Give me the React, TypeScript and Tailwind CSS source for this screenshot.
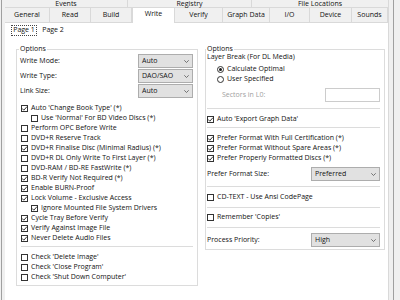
import React from "react";

function Check({ checked }: { checked?: boolean }) {
  return (
    <span className="w-[7px] h-[7px] border border-[#333333] bg-white flex items-center justify-center shrink-0">
      {checked && (
        <svg width="5" height="5" viewBox="0 0 5 5" className="overflow-visible">
          <path d="M0 2.4 L1.8 4.2 L5 0.6" stroke="#1a1a1a" strokeWidth="0.9" fill="none" />
        </svg>
      )}
    </span>
  );
}

function CB({ label, checked, className }: { label: string; checked?: boolean; className?: string }) {
  return (
    <div className={"flex items-center h-[10px] " + (className ?? "")}>
      <Check checked={checked} />
      <span className="ml-[3px] whitespace-nowrap leading-[10px]">{label}</span>
    </div>
  );
}

function Radio({ label, checked }: { label: string; checked?: boolean }) {
  return (
    <div className="flex items-center h-[10px] pl-[11px]">
      <span className="w-[7px] h-[7px] rounded-full border border-[#333333] bg-white flex items-center justify-center shrink-0">
        {checked && <span className="w-[3px] h-[3px] rounded-full bg-[#1a1a1a]" />}
      </span>
      <span className="ml-[3px] whitespace-nowrap leading-[10px]">{label}</span>
    </div>
  );
}

function Chevron() {
  return (
    <svg width="5" height="3" viewBox="0 0 5 3" className="shrink-0">
      <path d="M0.3 0.3 L2.5 2.5 L4.7 0.3" stroke="#555555" strokeWidth="0.8" fill="none" />
    </svg>
  );
}

function Select({ value, className }: { value: string; className: string }) {
  return (
    <div className={"h-[14px] border border-[#adadad] bg-[#e1e1e1] flex items-center justify-between pl-[3px] pr-[3px] " + className}>
      <span className="leading-[10px] whitespace-nowrap">{value}</span>
      <Chevron />
    </div>
  );
}

function Sep({ className }: { className: string }) {
  return <div className={"h-px bg-[#dcdcdc] " + className} />;
}

export default function App() {
  const row2 = [
    { t: "General", w: "w-[45px]" },
    { t: "Read", w: "w-[41px]" },
    { t: "Build", w: "w-[41px]" },
    { t: "Write", w: "w-[43px]", sel: true },
    { t: "Verify", w: "w-[48px]" },
    { t: "Graph Data", w: "w-[47px]" },
    { t: "I/O", w: "w-[40px]" },
    { t: "Device", w: "w-[42px]" },
    { t: "Sounds", w: "w-[36px]" },
  ];
  return (
    <div className="w-[400px] h-[300px] overflow-hidden flex bg-[#f0f0f0] text-[7px] text-[#111111] font-['Open_Sans',sans-serif]">
      {/* left frame */}
      <div className="flex h-full shrink-0">
        <div className="w-[1px] bg-[#f0f0f0]" />
        <div className="w-[1px] bg-[#a0a0a0]" />
        <div className="w-[3px] bg-[#f0f0f0]" />
      </div>

      {/* main */}
      <div className="w-[383px] flex flex-col shrink-0">
        {/* row 1 tabs */}
        <div className="h-[8px] flex shrink-0">
          <div className="w-[123px] border-r border-b border-[#d9d9d9] flex items-center justify-center leading-[7px]">Events</div>
          <div className="w-[124px] border-r border-b border-[#d9d9d9] flex items-center justify-center leading-[7px]">Registry</div>
          <div className="w-[136px] border-b border-[#d9d9d9] flex items-center justify-center leading-[7px]">File Locations</div>
        </div>
        {/* row 2 tabs */}
        <div className="h-[14px] flex shrink-0 items-start">
          {row2.map((t) =>
            t.sel ? (
              <div
                key={t.t}
                className={t.w + " -mt-px h-[16px] relative z-10 bg-white border-l border-r border-t border-[#d9d9d9] flex items-center justify-center pb-[2px] shrink-0"}
              >
                {t.t}
              </div>
            ) : (
              <div key={t.t} className={t.w + " h-[14px] border-r border-[#d9d9d9] flex items-center justify-center shrink-0"}>
                {t.t}
              </div>
            )
          )}
        </div>

        {/* page panel */}
        <div className="flex-1 bg-white border-t border-[#d9d9d9] flex flex-col">
          {/* page tabs */}
          <div className="mt-[2px] h-[11px] flex items-center shrink-0">
            <div className="ml-[6px] w-[26px] h-[11px] border border-dotted border-[#444444] flex items-center justify-center">Page 1</div>
            <div className="ml-[4px] w-[24px] h-[11px] flex items-center justify-center">Page 2</div>
          </div>

          {/* group boxes */}
          <div className="mt-[13px] ml-[11px] flex items-start gap-[7px]">
            {/* left group */}
            <div className="relative w-[182px] h-[237px] border border-[#dcdcdc] flex flex-col shrink-0">
              <span className="absolute -top-[6px] left-[2px] px-[1px] bg-white leading-[10px]">Options</span>
              <div className="mt-[4px] flex items-center justify-between pl-[3px] pr-[4px]">
                <span>Write Mode:</span>
                <Select value="Auto" className="w-[55px]" />
              </div>
              <div className="mt-[1px] flex items-center justify-between pl-[3px] pr-[4px]">
                <span>Write Type:</span>
                <Select value="DAO/SAO" className="w-[55px]" />
              </div>
              <div className="mt-[1px] flex items-center justify-between pl-[3px] pr-[4px]">
                <span>Link Size:</span>
                <Select value="Auto" className="w-[55px]" />
              </div>
              <div className="mt-[5px] flex flex-col">
                <CB className="pl-[4px]" checked label="Auto 'Change Book Type' (*)" />
                <CB className="pl-[14px]" label="Use 'Normal' For BD Video Discs (*)" />
                <CB className="pl-[4px]" label="Perform OPC Before Write" />
                <CB className="pl-[4px]" label="DVD+R Reserve Track" />
                <CB className="pl-[4px]" checked label="DVD+R Finalise Disc (Minimal Radius) (*)" />
                <CB className="pl-[4px]" label="DVD+R DL Only Write To First Layer (*)" />
                <CB className="pl-[4px]" label="DVD-RAM / BD-RE FastWrite (*)" />
                <CB className="pl-[4px]" checked label="BD-R Verify Not Required (*)" />
                <CB className="pl-[4px]" checked label="Enable BURN-Proof" />
                <CB className="pl-[4px]" checked label="Lock Volume - Exclusive Access" />
                <CB className="pl-[14px]" checked label="Ignore Mounted File System Drivers" />
                <CB className="pl-[4px]" checked label="Cycle Tray Before Verify" />
                <CB className="pl-[4px]" checked label="Verify Against Image File" />
                <CB className="pl-[4px]" checked label="Never Delete Audio Files" />
              </div>
              <Sep className="mt-[3px] ml-[4px] mr-[4px]" />
              <div className="mt-[5px] flex flex-col">
                <CB className="pl-[4px]" label="Check 'Delete Image'" />
                <CB className="pl-[4px]" label="Check 'Close Program'" />
                <CB className="pl-[4px]" label="Check 'Shut Down Computer'" />
              </div>
            </div>

            {/* right group */}
            <div className="relative w-[180px] h-[201px] border border-[#dcdcdc] flex flex-col shrink-0">
              <span className="absolute -top-[6px] left-[0px] px-[1px] bg-white leading-[10px]">Options</span>
              <div className="mt-[2px] h-[10px] pl-[1px] flex items-center">Layer Break (For DL Media)</div>
              <div className="mt-[2px]">
                <Radio checked label="Calculate Optimal" />
                <Radio label="User Specified" />
              </div>
              <div className="mt-[4px] h-[14px] flex items-center justify-between pl-[16px] pr-[4px]">
                <span className="text-[#a0a0a0]">Sectors in L0:</span>
                <div className="w-[55px] h-[14px] border border-[#cccccc] bg-white" />
              </div>
              <Sep className="mt-[6px] ml-[1px] mr-[4px]" />
              <CB className="mt-[5px] pl-[1px]" checked label="Auto 'Export Graph Data'" />
              <Sep className="mt-[3px] ml-[1px] mr-[4px]" />
              <div className="mt-[5px] flex flex-col">
                <CB className="pl-[1px]" checked label="Prefer Format With Full Certification (*)" />
                <CB className="pl-[1px]" checked label="Prefer Format Without Spare Areas (*)" />
                <CB className="pl-[1px]" checked label="Prefer Properly Formatted Discs (*)" />
              </div>
              <div className="mt-[4px] flex items-center justify-between pl-[1px] pr-[4px]">
                <span>Prefer Format Size:</span>
                <Select value="Preferred" className="w-[69px]" />
              </div>
              <Sep className="mt-[5px] ml-[1px] mr-[4px]" />
              <CB className="mt-[5px] pl-[1px]" label="CD-TEXT - Use Ansi CodePage" />
              <Sep className="mt-[5px] ml-[1px] mr-[4px]" />
              <CB className="mt-[4px] pl-[1px]" label="Remember 'Copies'" />
              <Sep className="mt-[5px] ml-[1px] mr-[4px]" />
              <div className="mt-[5px] flex items-center justify-between pl-[1px] pr-[4px]">
                <span>Process Priority:</span>
                <Select value="High" className="w-[69px]" />
              </div>
            </div>
          </div>
        </div>
      </div>

      {/* right frame */}
      <div className="flex h-full shrink-0">
        <div className="w-[1px] bg-[#d9d9d9]" />
        <div className="w-[4px] bg-[#f0f0f0]" />
        <div className="w-[1px] bg-[#a0a0a0]" />
        <div className="w-[6px] bg-[#f0f0f0]" />
      </div>
    </div>
  );
}
